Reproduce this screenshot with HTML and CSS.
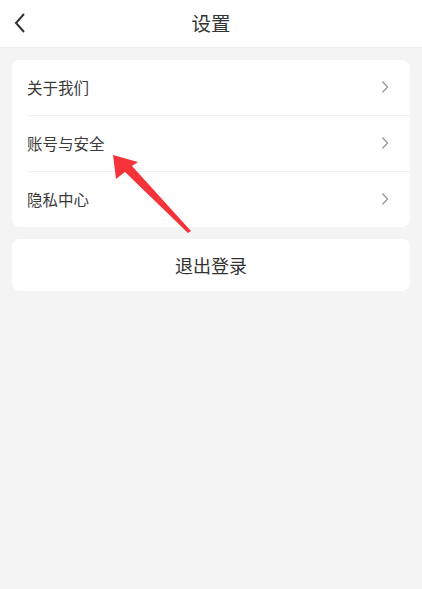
FILE: index.html
```html
<!DOCTYPE html>
<html lang="zh-CN">
<head>
    <meta charset="UTF-8">
    <meta name="viewport" content="width=device-width, initial-scale=1.0">
    <title>设置</title>
    <link rel="stylesheet" href="styles.css">
</head>
<body>
    <div class="header">
        <span class="back">
            <svg width="14" height="22" viewBox="0 0 14 22"><path d="M11 2 L3 11 L11 20" fill="none" stroke="#333" stroke-width="2"/></svg>
        </span>
        <h1>设置</h1>
    </div>

    <div class="content">
        <div class="card menu">
            <div class="row"><span>关于我们</span><span class="chev"><svg width="8" height="14" viewBox="0 0 8 14"><path d="M1.5 1.5 L6.5 7 L1.5 12.5" fill="none" stroke="#999" stroke-width="1.3"/></svg></span></div>
            <div class="row"><span>账号与安全</span><span class="chev"><svg width="8" height="14" viewBox="0 0 8 14"><path d="M1.5 1.5 L6.5 7 L1.5 12.5" fill="none" stroke="#999" stroke-width="1.3"/></svg></span></div>
            <div class="row"><span>隐私中心</span><span class="chev"><svg width="8" height="14" viewBox="0 0 8 14"><path d="M1.5 1.5 L6.5 7 L1.5 12.5" fill="none" stroke="#999" stroke-width="1.3"/></svg></span></div>
        </div>

        <div class="card logout">退出登录</div>
    </div>

    <svg class="arrow" width="422" height="589" viewBox="0 0 422 589">
        <polygon points="113,155 116,179 125,172 188,233 191,231 132,166 138,162" fill="#f5333a"/>
    </svg>
</body>
</html>
```

FILE: styles.css
```css
html, body {
    margin: 0;
    padding: 0;
}
body {
    font-family: "Noto Sans CJK SC", "Noto Sans", sans-serif;
    background-color: #f4f4f4;
    height: 589px;
    position: relative;
    overflow: hidden;
}
.header {
    height: 47px;
    background-color: #fff;
    border-bottom: 1px solid #ebebeb;
    display: flex;
    align-items: center;
    justify-content: center;
    position: relative;
    box-sizing: content-box;
    padding-bottom: 0;
}
.header h1 {
    margin: 0 0 3px 0;
    font-size: 19.5px;
    font-weight: normal;
    color: #333;
}
.back {
    position: absolute;
    left: 13px;
    top: 12px;
    display: flex;
}
.content {
    padding: 12px 12px 0 12px;
}
.card {
    background-color: #fff;
    border-radius: 8px;
}
.menu {
    padding: 0 0 0 15px;
}
.row {
    height: 56px;
    display: flex;
    align-items: center;
    justify-content: space-between;
    padding-right: 21px;
    padding-bottom: 1px;
    font-size: 15.5px;
    color: #3a3a3a;
    border-bottom: 1px solid #f0f0f0;
    box-sizing: border-box;
}
.row:last-child {
    border-bottom: none;
    height: 55px;
}
.chev {
    display: flex;
}
.logout {
    margin-top: 12px;
    height: 52px;
    display: flex;
    align-items: center;
    justify-content: center;
    font-size: 18px;
    color: #333;
}
.arrow {
    position: absolute;
    left: 0;
    top: 0;
    pointer-events: none;
}
```
